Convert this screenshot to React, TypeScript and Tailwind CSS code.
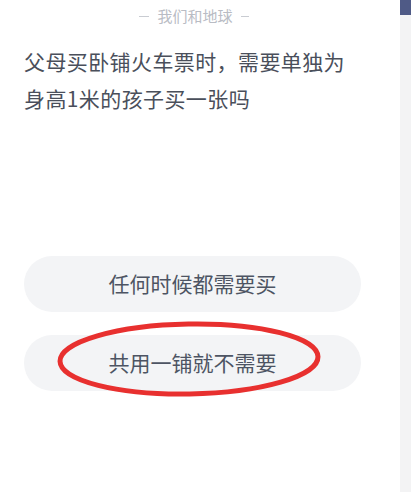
import React from "react";

export default function App() {
  return (
    <div
      className="flex w-[411px] h-[492px] bg-white overflow-hidden"
      style={{ fontFamily: '"Noto Sans CJK SC", "Noto Sans", sans-serif' }}
    >
      <div className="relative w-[400px] shrink-0 h-full flex flex-col bg-white">
        <div className="flex items-center justify-center gap-[8px] pt-[4px] h-[28px] text-[15px] text-[#b9bcc4] pr-[12px]">
          <span className="block w-[10px] h-px bg-[#c9ccd2]" />
          <span>我们和地球</span>
          <span className="block w-[8px] h-px bg-[#c9ccd2]" />
        </div>
        <div className="pl-[24px] pt-[15px] text-[21px] leading-[37px] text-[#4a4f5b] tracking-[0.4px]">
          <div>父母买卧铺火车票时，需要单独为</div>
          <div>身高1米的孩子买一张吗</div>
        </div>
        <div className="mt-[139px] ml-[24px] w-[337px] flex flex-col gap-[23px]">
          <div className="h-[56px] rounded-full bg-[#f3f4f6] flex items-center justify-center text-[21px] text-[#4d5463]">
            任何时候都需要买
          </div>
          <div className="h-[56px] rounded-full bg-[#f3f4f6] flex items-center justify-center text-[21px] text-[#4d5463]">
            共用一铺就不需要
          </div>
        </div>
        <svg
          className="absolute left-0 top-0 pointer-events-none"
          width="400"
          height="492"
          viewBox="0 0 400 492"
        >
          <ellipse
            cx="189"
            cy="359"
            rx="129"
            ry="35"
            fill="none"
            stroke="#e8302f"
            strokeWidth="5"
            transform="rotate(-1 189 359)"
          />
        </svg>
      </div>
      <div className="w-[11px] shrink-0 h-full bg-[#f3f3f4] flex flex-col">
        <div className="h-[15px] bg-[#4f5a86]" />
      </div>
    </div>
  );
}
